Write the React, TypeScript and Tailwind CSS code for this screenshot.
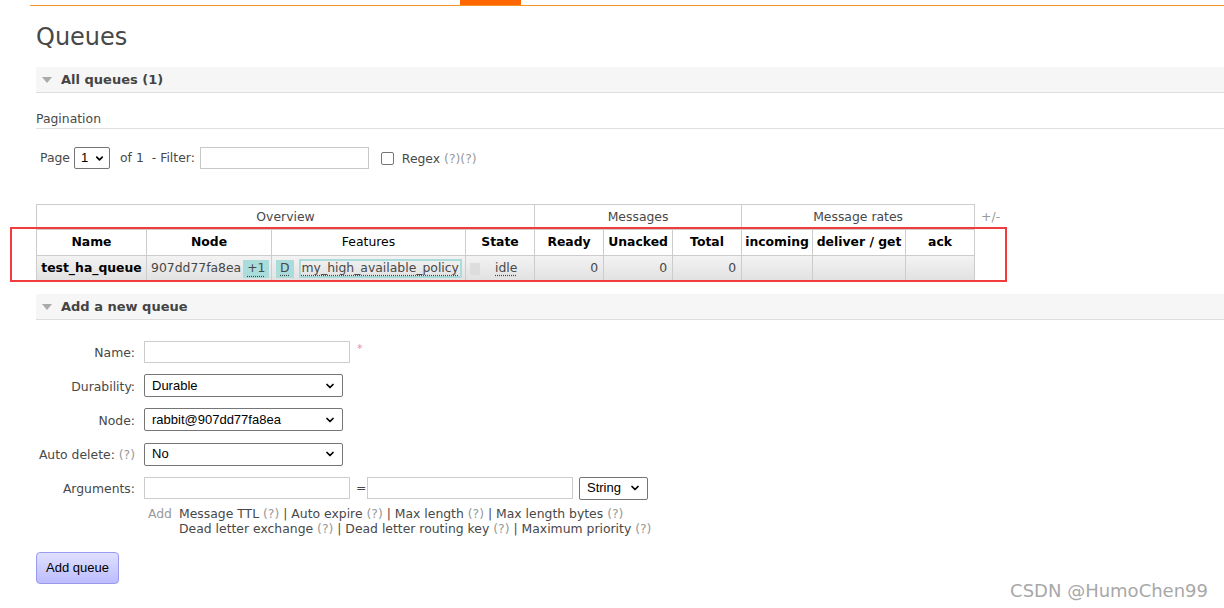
import { ChevronDown } from 'lucide-react';

const help = <span className="text-[#999]">(?)</span>;

function Select({ value, width }: { value: string; width: string }) {
  return (
    <div
      className={`flex h-[23px] items-center justify-between rounded-[2px] border border-[#767676] bg-white pl-[7px] pr-[6px] font-['Liberation_Sans',sans-serif] text-[13px] text-black ${width}`}
    >
      <span>{value}</span>
      <ChevronDown className="h-[12px] w-[12px]" strokeWidth={3.5} />
    </div>
  );
}

function SectionHeader({ title }: { title: string }) {
  return (
    <div className="flex h-[26px] items-center border-b border-[#dddddd] bg-[#f6f6f6] pl-[6px] text-[13px] font-bold text-[#444]">
      <span className="mr-[9px] mt-[1px] h-0 w-0 border-x-[5px] border-t-[6px] border-x-transparent border-t-[#aaa]" />
      {title}
    </div>
  );
}

function Badge({ children }: { children: React.ReactNode }) {
  return (
    <span className="inline-flex h-[18px] items-center bg-[#aadcdc] px-[4px] align-middle underline decoration-dotted underline-offset-[3px]">
      {children}
    </span>
  );
}

const th2 = 'border border-[#cccccc] bg-white font-bold text-black h-[26px] px-[2px] whitespace-nowrap';
const td = 'border border-[#cccccc] h-[26px] px-[4px]';
const label = 'w-[99px] mt-[3px] whitespace-nowrap text-right';

export default function App() {
  return (
    <div className="relative h-[608px] w-[1224px] overflow-hidden bg-white font-['DejaVu_Sans',Verdana,sans-serif] text-[12.4px] text-[#484848]">
      {/* top nav line */}
      <div className="flex h-[5px] pl-[460px]">
        <div className="h-[5px] w-[61px] bg-[#ff6600]" />
      </div>
      <div className="ml-[30px] h-[1px] bg-[#f39424]" />

      <div className="pl-[36px]">
        <h1 className="mt-[15px] h-[32px] text-[24px] leading-[32px] text-[#484848]">Queues</h1>

        <div className="mt-[14px]">
          <SectionHeader title="All queues (1)" />
        </div>

        <div className="border-b border-[#e0e0e0] pb-[2px] pt-[18px] leading-[15px]">Pagination</div>

        <div className="mt-[18px] flex h-[22px] items-center pl-[4px]">
          <span>Page</span>
          <div className="ml-[4px] flex h-[22px] w-[36px] items-center justify-between rounded-[2px] border border-[#767676] pl-[6px] pr-[4px] font-['Liberation_Sans',sans-serif] text-[13px] text-black">
            <span>1</span>
            <ChevronDown className="h-[11px] w-[11px]" strokeWidth={3.5} />
          </div>
          <span className="ml-[10px]">of 1</span>
          <span className="ml-[8px]">- Filter:</span>
          <div className="ml-[5px] h-[22px] w-[169px] border border-[#c8c8c8]" />
          <div className="ml-[12px] h-[13px] w-[13px] rounded-[2px] border border-[#767676]" />
          <span className="ml-[8px] mt-[3px]">
            Regex <span className="text-[#999]">(?)(?)</span>
          </span>
        </div>

        <div className="mt-[35px] flex">
          <table className="w-[938px] table-fixed border-collapse text-center">
            <colgroup>
              <col className="w-[110px]" />
              <col className="w-[125px]" />
              <col className="w-[194px]" />
              <col className="w-[69px]" />
              <col className="w-[69px]" />
              <col className="w-[69px]" />
              <col className="w-[69px]" />
              <col className="w-[71px]" />
              <col className="w-[93px]" />
              <col className="w-[69px]" />
            </colgroup>
            <thead>
              <tr>
                <th colSpan={4} className="h-[25px] border border-[#cccccc] font-normal">Overview</th>
                <th colSpan={3} className="border border-[#cccccc] font-normal">Messages</th>
                <th colSpan={3} className="border border-[#cccccc] font-normal">Message rates</th>
              </tr>
              <tr>
                <th className={th2}>Name</th>
                <th className={th2}>Node</th>
                <th className={`${th2} font-normal text-[#484848]`}>Features</th>
                <th className={th2}>State</th>
                <th className={th2}>Ready</th>
                <th className={th2}>Unacked</th>
                <th className={th2}>Total</th>
                <th className={`${th2} px-0`}>incoming</th>
                <th className={`${th2} px-0`}>deliver / get</th>
                <th className={th2}>ack</th>
              </tr>
            </thead>
            <tbody className="bg-gradient-to-b from-[#f3f3f3] to-[#e0e0e0]">
              <tr>
                <td className={`${td} whitespace-nowrap px-0 font-bold text-black`}>test_ha_queue</td>
                <td className={`${td} whitespace-nowrap text-left`}>
                  <span>907dd77fa8ea</span>
                  <span className="ml-[2px]">
                    <Badge>+1</Badge>
                  </span>
                </td>
                <td className={`${td} whitespace-nowrap text-left`}>
                  <Badge>D</Badge>
                  <span className="ml-[5px] inline-flex h-[19px] items-center border-2 border-[#aadcdc] px-[1px] align-middle underline decoration-dotted underline-offset-[3px]">
                    my_high_available_policy
                  </span>
                </td>
                <td className={`${td} whitespace-nowrap text-left`}>
                  <span className="inline-block h-[12px] w-[10px] bg-[#dddddd] align-middle" />
                  <span className="ml-[15px] underline decoration-dotted underline-offset-[3px]">idle</span>
                </td>
                <td className={`${td} pr-[5px] text-right`}>0</td>
                <td className={`${td} pr-[5px] text-right`}>0</td>
                <td className={`${td} pr-[5px] text-right`}>0</td>
                <td className={td} />
                <td className={td} />
                <td className={td} />
              </tr>
            </tbody>
          </table>
          <span className="ml-[6px] mt-[4px] text-[#999]">+/-</span>
        </div>

        <div className="mt-[12px]">
          <SectionHeader title="Add a new queue" />
        </div>

        <div className="mt-[21px] flex flex-col gap-[11px]">
          <div className="flex h-[22px] items-center">
            <span className={label}>Name:</span>
            <div className="ml-[9px] h-[22px] w-[206px] border border-[#cccccc]" />
            <span className="ml-[7px] -mt-[6px] text-[11px] text-[#f28aa0]">*</span>
          </div>
          <div className="flex h-[23px] items-center">
            <span className={label}>Durability:</span>
            <div className="ml-[9px]">
              <Select value="Durable" width="w-[199px]" />
            </div>
          </div>
          <div className="flex h-[23px] items-center">
            <span className={label}>Node:</span>
            <div className="ml-[9px]">
              <Select value="rabbit@907dd77fa8ea" width="w-[199px]" />
            </div>
          </div>
          <div className="flex h-[24px] items-center">
            <span className={label}>Auto delete: {help}</span>
            <div className="ml-[9px]">
              <Select value="No" width="w-[199px]" />
            </div>
          </div>
          <div className="flex h-[22px] items-center">
            <span className={label}>Arguments:</span>
            <div className="ml-[9px] h-[22px] w-[206px] border border-[#cccccc]" />
            <span className="ml-[6px] w-[10px]">=</span>
            <div className="ml-[1px] h-[22px] w-[206px] border border-[#cccccc]" />
            <div className="ml-[6px]">
              <Select value="String" width="w-[69px]" />
            </div>
          </div>
        </div>

        <div className="mt-[7px] flex pl-[112px] leading-[15px]">
          <span className="w-[31px] text-[#999]">Add</span>
          <div>
            <div>
              Message TTL {help} | Auto expire {help} | Max length {help} | Max length bytes {help}
            </div>
            <div>
              Dead letter exchange {help} | Dead letter routing key {help} | Maximum priority {help}
            </div>
          </div>
        </div>

        <button className="mt-[16px] h-[32px] w-[83px] rounded-[4px] border border-[#9999ee] bg-gradient-to-b from-[#e0e0ff] to-[#bcbcff] font-['Liberation_Sans',sans-serif] text-[13px] text-black">
          Add queue
        </button>
      </div>

      {/* annotation box */}
      <div className="absolute left-[10px] top-[227px] h-[55px] w-[997px] border-2 border-[#f03c3c]" />

      {/* watermark */}
      <div className="absolute right-[16px] top-[577px] font-['DejaVu_Sans',sans-serif] text-[18px] text-[#a8a8a8]">
        CSDN @HumoChen99
      </div>
    </div>
  );
}
